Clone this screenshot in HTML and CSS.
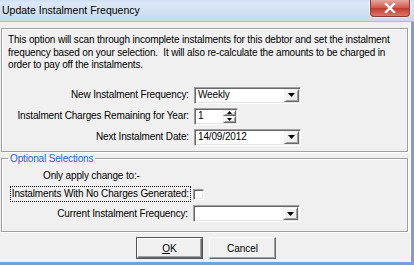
FILE: index.html
```html
<!DOCTYPE html>
<html lang="en">
<head>
    <meta charset="UTF-8">
    <title>Update Instalment Frequency</title>
    <link rel="stylesheet" href="styles.css">
</head>
<body>
<div class="window">
    <div class="titlebar">
        <span class="title">Update Instalment Frequency</span>
        <span class="close">
            <svg width="12" height="10" viewBox="0 0 12 10"><path d="M2 1 L10 9 M10 1 L2 9" stroke="#fff" stroke-width="2.4" stroke-linecap="square"/></svg>
        </span>
    </div>

    <div class="client">
        <!-- Main options -->
        <div class="panel">
            <p class="intro">This option will scan through incomplete instalments for this debtor and set the instalment<br>frequency based on your selection.&nbsp; It will also re-calculate the amounts to be charged in<br>order to pay off the instalments.</p>
            <div class="form">
                <label>New Instalment Frequency:</label>
                <div class="combo wide"><span class="value">Weekly</span><span class="drop"><svg width="7" height="4" viewBox="0 0 7 4"><path d="M0 0 H7 L3.5 4 Z" fill="#000"/></svg></span></div>

                <label>Instalment Charges Remaining for Year:</label>
                <div class="combo spin"><span class="value">1</span>
                    <span class="spin-btns">
                        <span class="spin-btn"><svg width="5" height="3" viewBox="0 0 5 3"><path d="M0 3 H5 L2.5 0 Z" fill="#000"/></svg></span>
                        <span class="spin-btn"><svg width="5" height="3" viewBox="0 0 5 3"><path d="M0 0 H5 L2.5 3 Z" fill="#000"/></svg></span>
                    </span>
                </div>

                <label>Next Instalment Date:</label>
                <div class="combo wide"><span class="value">14/09/2012</span><span class="drop"><svg width="7" height="4" viewBox="0 0 7 4"><path d="M0 0 H7 L3.5 4 Z" fill="#000"/></svg></span></div>
            </div>
        </div>

        <!-- Optional selections -->
        <fieldset class="group">
            <legend>Optional Selections</legend>
            <div class="note">Only apply change to:-</div>
            <div class="form">
                <label class="focused">Instalments With No Charges Generated:</label>
                <span class="check"></span>

                <label>Current Instalment Frequency:</label>
                <div class="combo wide"><span class="value"></span><span class="drop"><svg width="7" height="4" viewBox="0 0 7 4"><path d="M0 0 H7 L3.5 4 Z" fill="#000"/></svg></span></div>
            </div>
        </fieldset>

        <div class="buttons">
            <button class="btn default"><u>O</u>K</button>
            <button class="btn">Cancel</button>
        </div>
    </div>
</div>
</body>
</html>
```

FILE: styles.css
```css
body {
    margin: 0;
    font-family: "Liberation Sans", Arial, sans-serif;
    font-size: 10px;
    letter-spacing: -0.15px;
    color: #000;
}
.window {
    width: 414px;
    height: 265px;
    box-sizing: border-box;
    background-color: #7f9dc6;
    padding: 0 3px 3px 0;
    display: flex;
    flex-direction: column;
}
.titlebar {
    height: 22px;
    margin-right: -3px;
    box-sizing: border-box;
    display: flex;
    align-items: flex-start;
    justify-content: space-between;
    background: linear-gradient(#cddff2 0, #dce8f6 3px, #c6d9ee 100%);
    border-bottom: 1px solid #a7bdd6;
}
.title {
    font-size: 10.5px;
    letter-spacing: 0;
    line-height: 21px;
    padding-left: 2px;
    color: #000;
}
.close {
    width: 40px;
    height: 17px;
    margin-right: 4px;
    box-sizing: border-box;
    display: flex;
    align-items: center;
    justify-content: center;
    background: linear-gradient(#e6a79e, #d0594b 50%, #c3392b 51%, #d8786a);
    border: 1px solid #8c3c35;
    border-top: none;
    border-radius: 0 0 4px 4px;
    box-shadow: 0 0 0 1px rgba(255, 255, 255, 0.6);
}
.client {
    flex: 1;
    background-color: #f0f0f0;
    padding: 6px 1px 0 1px;
    display: flex;
    flex-direction: column;
    border-right: 1px solid #fff;
}
.panel {
    border: 1px solid #a0a0a0;
    box-shadow: 1px 1px 0 #fff, inset 1px 1px 0 #fff;
    padding: 5px 6px 6px 6px;
    height: 124px;
    box-sizing: border-box;
    margin-right: 1px;
}
.intro {
    margin: 0;
    line-height: 12.5px;
    white-space: nowrap;
}
.form {
    display: grid;
    grid-template-columns: 187px auto;
    column-gap: 5px;
    row-gap: 4px;
    align-items: center;
    justify-items: start;
}
.form label {
    justify-self: end;
    line-height: 14px;
}
.panel .form {
    margin-top: 15px;
    margin-left: -6px;
}
.combo {
    height: 17px;
    box-sizing: border-box;
    background-color: #fff;
    border: 1px solid;
    border-color: #a0a0a0 #fff #fff #a0a0a0;
    box-shadow: inset 1px 1px 0 #696969, inset -1px -1px 0 #e3e3e3;
    display: flex;
    align-items: center;
    padding: 2px 1px 2px 3px;
}
.combo.wide {
    width: 107px;
}
.combo.spin {
    width: 44px;
}
.value {
    flex: 1;
    line-height: 12px;
}
.drop,
.spin-btn {
    background-color: #f0f0f0;
    box-sizing: border-box;
    border: 1px solid;
    border-color: #f0f0f0 #696969 #696969 #f0f0f0;
    box-shadow: inset 1px 1px 0 #fff, inset -1px -1px 0 #a0a0a0;
    display: flex;
    align-items: center;
    justify-content: center;
}
.drop {
    width: 15px;
    height: 13px;
}
.spin-btns {
    display: flex;
    flex-direction: column;
    width: 13px;
    height: 13px;
}
.spin-btn {
    flex: 1;
}
.group {
    margin: 0 1px 0 0;
    padding: 0 0 10px 0;
    border: 1px solid #a0a0a0;
    box-shadow: 1px 1px 0 #fff, inset 1px 1px 0 #fff;
    height: 80px;
    box-sizing: border-box;
}
.group legend {
    margin-left: 6px;
    padding: 0 2px;
    color: #1f63cf;
    line-height: 13px;
}
.note {
    padding-left: 41px;
    line-height: 12px;
    margin-top: 5px;
}
.group .form {
    margin-top: 5px;
    margin-left: -1px;
}
.focused {
    outline: 1px dotted #000;
    outline-offset: 0;
    padding: 0 1px;
    margin-right: -2px;
}
.check {
    width: 11px;
    height: 11px;
    box-sizing: border-box;
    background-color: #fff;
    border: 1px solid;
    border-color: #a0a0a0 #fff #fff #a0a0a0;
    box-shadow: inset 1px 1px 0 #696969, inset -1px -1px 0 #e3e3e3;
}
.buttons {
    display: flex;
    justify-content: center;
    gap: 6px;
    margin-top: 5px;
    padding-left: 2px;
}
.btn {
    width: 67px;
    height: 22px;
    font-family: inherit;
    font-size: 10px;
    letter-spacing: 0;
    background-color: #f0f0f0;
    border: 1px solid;
    border-color: #fff #696969 #696969 #fff;
    box-shadow: inset -1px -1px 0 #a0a0a0;
    padding: 0;
    color: #000;
}
.btn.default {
    border-color: #555;
    box-shadow: inset 1px 1px 0 #fff, inset -1px -1px 0 #696969, inset -2px -2px 0 #a0a0a0;
}
```
